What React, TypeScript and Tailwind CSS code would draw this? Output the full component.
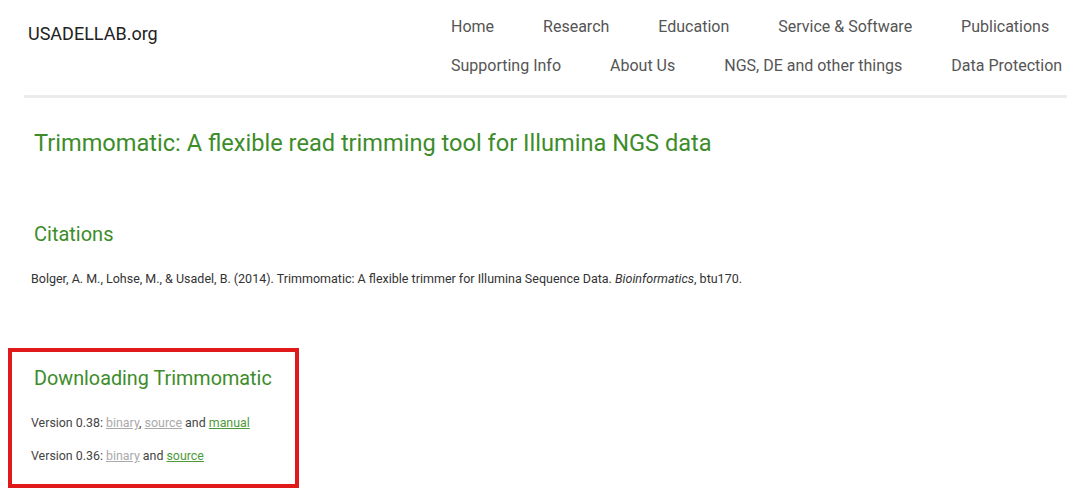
import React from "react";

const font = { fontFamily: "Roboto, 'Liberation Sans', sans-serif" };

export default function App() {
  return (
    <div className="w-[1080px] h-[499px] bg-white overflow-hidden text-[#444]" style={font}>
      <header className="flex ml-[24px] mr-[13px] border-b-[3px] border-[#ececec] h-[98px]">
        <div className="pl-[4px] pt-[22px] text-[18px] text-[#222] leading-[24px]">USADELLAB.org</div>
        <nav className="ml-auto mr-[-20px] w-[636px] pt-[15px] text-[16px] leading-[24px] text-[#555]">
          <div className="flex gap-[49px]">
            <span>Home</span>
            <span>Research</span>
            <span>Education</span>
            <span>Service &amp; Software</span>
            <span>Publications</span>
          </div>
          <div className="flex gap-[49px] mt-[15px]">
            <span>Supporting Info</span>
            <span>About Us</span>
            <span>NGS, DE and other things</span>
            <span>Data Protection</span>
          </div>
        </nav>
      </header>
      <main className="px-[31px]">
        <h1 className="mt-[28px] pl-[3px] text-[23.6px] leading-[34px] text-[#3d8c2a]">
          Trimmomatic: A flexible read trimming tool for Illumina NGS data
        </h1>
        <h2 className="mt-[59px] pl-[3px] text-[20px] leading-[30px] text-[#3d8c2a]">Citations</h2>
        <p className="mt-[22px] text-[12.5px] leading-[16px] text-[#333]">
          Bolger, A. M., Lohse, M., &amp; Usadel, B. (2014). Trimmomatic: A flexible trimmer for Illumina Sequence Data. <i>Bioinformatics</i>, btu170.
        </p>
      </main>
      <div className="ml-[8px] mt-[61px] w-[291px] h-[140px] border-[4px] border-[#e01a1a] pl-[19px]">
        <h3 className="mt-[13px] pl-[3px] text-[19.8px] leading-[28px] text-[#3d8c2a]">Downloading Trimmomatic</h3>
        <p className="mt-[21px] text-[12.4px] leading-[18px] text-[#444]">
          Version 0.38: <a className="underline text-[#aaa]">binary</a>, <a className="underline text-[#aaa]">source</a> and <a className="underline text-[#4d9a3a]">manual</a>
        </p>
        <p className="mt-[15px] text-[12.4px] leading-[18px] text-[#444]">
          Version 0.36: <a className="underline text-[#aaa]">binary</a> and <a className="underline text-[#4d9a3a]">source</a>
        </p>
      </div>
    </div>
  );
}
